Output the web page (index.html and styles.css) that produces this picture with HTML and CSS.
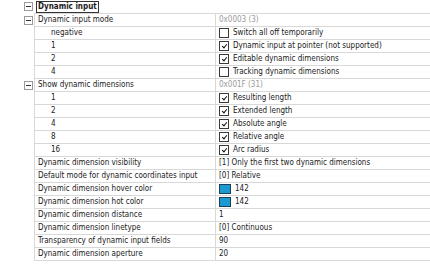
FILE: index.html
```html
<!DOCTYPE html>
<html lang="en">
<head>
    <meta charset="UTF-8">
    <title>Dynamic input</title>
    <link rel="stylesheet" href="styles.css">
</head>
<body>
    <div class="header">
        <span class="toggle"></span>
        <span class="title">Dynamic input</span>
    </div>
    <div class="grid">
        <div class="row">
            <div class="gutter"><span class="toggle"></span></div>
            <div class="name">Dynamic input mode</div>
            <div class="value muted">0x0003 (3)</div>
        </div>
        <div class="row">
            <div class="gutter"></div>
            <div class="name sub">negative</div>
            <div class="value"><span class="check"></span>Switch all off temporarily</div>
        </div>
        <div class="row">
            <div class="gutter"></div>
            <div class="name sub">1</div>
            <div class="value"><span class="check on"></span>Dynamic input at pointer (not supported)</div>
        </div>
        <div class="row">
            <div class="gutter"></div>
            <div class="name sub">2</div>
            <div class="value"><span class="check on"></span>Editable dynamic dimensions</div>
        </div>
        <div class="row">
            <div class="gutter"></div>
            <div class="name sub">4</div>
            <div class="value"><span class="check"></span>Tracking dynamic dimensions</div>
        </div>
        <div class="row">
            <div class="gutter"><span class="toggle"></span></div>
            <div class="name">Show dynamic dimensions</div>
            <div class="value muted">0x001F (31)</div>
        </div>
        <div class="row">
            <div class="gutter"></div>
            <div class="name sub">1</div>
            <div class="value"><span class="check on"></span>Resulting length</div>
        </div>
        <div class="row">
            <div class="gutter"></div>
            <div class="name sub">2</div>
            <div class="value"><span class="check on"></span>Extended length</div>
        </div>
        <div class="row">
            <div class="gutter"></div>
            <div class="name sub">4</div>
            <div class="value"><span class="check on"></span>Absolute angle</div>
        </div>
        <div class="row">
            <div class="gutter"></div>
            <div class="name sub">8</div>
            <div class="value"><span class="check on"></span>Relative angle</div>
        </div>
        <div class="row">
            <div class="gutter"></div>
            <div class="name sub">16</div>
            <div class="value"><span class="check on"></span>Arc radius</div>
        </div>
        <div class="row">
            <div class="gutter"></div>
            <div class="name">Dynamic dimension visibility</div>
            <div class="value">[1] Only the first two dynamic dimensions</div>
        </div>
        <div class="row">
            <div class="gutter"></div>
            <div class="name">Default mode for dynamic coordinates input</div>
            <div class="value">[0] Relative</div>
        </div>
        <div class="row">
            <div class="gutter"></div>
            <div class="name">Dynamic dimension hover color</div>
            <div class="value"><span class="swatch"></span>142</div>
        </div>
        <div class="row">
            <div class="gutter"></div>
            <div class="name">Dynamic dimension hot color</div>
            <div class="value"><span class="swatch"></span>142</div>
        </div>
        <div class="row">
            <div class="gutter"></div>
            <div class="name">Dynamic dimension distance</div>
            <div class="value">1</div>
        </div>
        <div class="row">
            <div class="gutter"></div>
            <div class="name">Dynamic dimension linetype</div>
            <div class="value">[0] Continuous</div>
        </div>
        <div class="row">
            <div class="gutter"></div>
            <div class="name">Transparency of dynamic input fields</div>
            <div class="value">90</div>
        </div>
        <div class="row">
            <div class="gutter"></div>
            <div class="name">Dynamic dimension aperture</div>
            <div class="value">20</div>
        </div>
    </div>
</body>
</html>
```

FILE: styles.css
```css
body {
    margin: 0;
    font-family: "DejaVu Sans Condensed", "DejaVu Sans", sans-serif;
    font-stretch: condensed;
    font-size: 8px;
    color: #1a1a1a;
    background: #fff;
}

.header {
    height: 13px;
    display: flex;
    align-items: center;
    padding-left: 24px;
}

.header .toggle {
    margin-right: 3px;
}

.title {
    font-weight: bold;
    height: 12px;
    line-height: 10px;
    padding: 0 1px 0 1px;
    border: 1px solid #333;
    box-sizing: border-box;
}

.toggle {
    width: 9px;
    height: 9px;
    box-sizing: border-box;
    border: 1px solid #9a9a9a;
    position: relative;
    display: inline-block;
}

.toggle::after {
    content: "";
    position: absolute;
    left: 1px;
    top: 3px;
    width: 5px;
    height: 1px;
    background: #333;
}

.grid {
    border-top: 1px solid #d8d8d8;
    margin-left: 34px;
}

.row {
    display: flex;
    height: 13px;
    margin-left: -34px;
}

.gutter {
    width: 34px;
    display: flex;
    align-items: center;
    justify-content: flex-end;
    padding-right: 1px;
    box-sizing: border-box;
}

.name,
.value {
    height: 13px;
    line-height: 12px;
    border-bottom: 1px solid #d8d8d8;
    box-sizing: border-box;
    white-space: nowrap;
    overflow: hidden;
}

.name {
    width: 182px;
    border-left: 1px solid #d8d8d8;
    border-right: 1px solid #d8d8d8;
    padding-left: 3px;
}

.name.sub {
    padding-left: 16px;
}

.value {
    flex: 1;
    padding-left: 3px;
    display: flex;
    align-items: center;
}

.muted {
    color: #9a9a9a;
}

.check {
    width: 10px;
    height: 10px;
    box-sizing: border-box;
    border: 1px solid #3a3a3a;
    background: #fff;
    margin-right: 4px;
    position: relative;
}

.check.on::after {
    content: "";
    position: absolute;
    left: 2.5px;
    top: 1px;
    width: 2px;
    height: 4px;
    border-right: 1.5px solid #111;
    border-bottom: 1.5px solid #111;
    transform: rotate(40deg);
}

.swatch {
    width: 12px;
    height: 10px;
    box-sizing: border-box;
    border: 1px solid #1f3f55;
    background: #1a9ad0;
    margin-right: 4px;
}
```
